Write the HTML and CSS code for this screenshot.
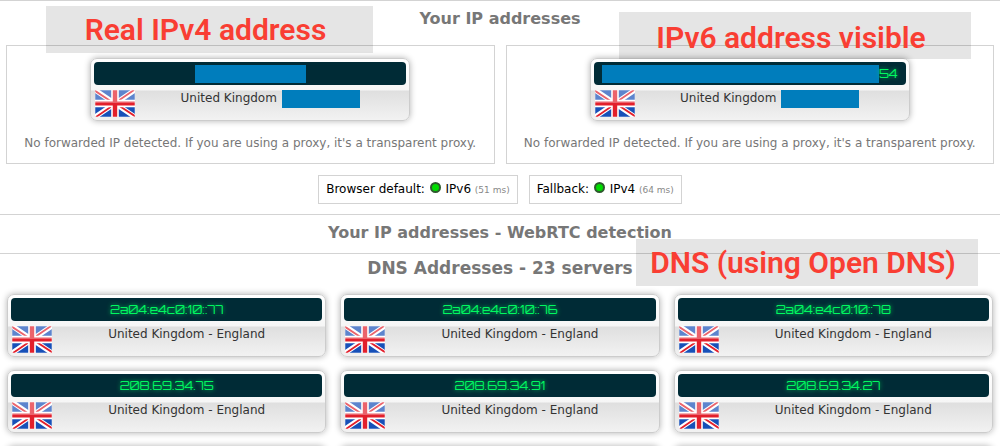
FILE: index.html
```
<!DOCTYPE html>
<html lang="en">
<head>
    <meta charset="utf-8">
    <title>IP leak test</title>
    <link rel="stylesheet" href="styles.css">
</head>
<body>
    <!-- Flag shared by every address card -->
    <svg class="defs" width="0" height="0" aria-hidden="true">
        <defs>
            <symbol id="flag-gb" viewBox="0 0 40 27">
                <path fill="#1750b8" d="M0 0h40v27H0z"/>
                <path stroke="#fff" stroke-width="5" d="M0 0l40 27M40 0L0 27"/>
                <path stroke="#e2202c" stroke-width="1.8" d="M0 .8L20 14M40 26.2L20 13M39 0L20 13M1 27l19-13"/>
                <path fill="#fff" d="M16.2 0h7.6v27h-7.6zM0 9.8h40v7.4H0z"/>
                <path fill="#e2202c" d="M17.8 0h4.4v27h-4.4zM0 11.4h40v4.2H0z"/>
                <path fill="#fff" fill-opacity=".3" d="M0 0h40v13H0z"/>
                <path fill="none" stroke="#fff" stroke-opacity=".25" d="M.5.5h39v26H.5z"/>
            </symbol>
        </defs>
    </svg>

    <section class="panel">
        <h2>Your IP addresses</h2>
        <div class="note note-ipv4">Real IPv4 address</div>
        <div class="note note-ipv6">IPv6 address visible</div>
        <div class="boxes">
            <div class="box">
                <div class="card">
                    <div class="ip"><span class="redacted redacted-ipv4"></span></div>
                    <div class="place">
                        <svg class="flag"><use href="#flag-gb"/></svg>
                        <p>United Kingdom <span class="redacted redacted-place"></span></p>
                    </div>
                </div>
                <p class="forwarded">No forwarded IP detected. If you are using a proxy, it's a transparent proxy.</p>
            </div>
            <div class="box">
                <div class="card">
                    <div class="ip"><span class="redacted redacted-ipv6"></span>54</div>
                    <div class="place">
                        <svg class="flag"><use href="#flag-gb"/></svg>
                        <p>United Kingdom <span class="redacted redacted-place"></span></p>
                    </div>
                </div>
                <p class="forwarded">No forwarded IP detected. If you are using a proxy, it's a transparent proxy.</p>
            </div>
        </div>
        <div class="modes">
            <div class="mode">Browser default: <span class="dot"></span> IPv6 <small>(51 ms)</small></div>
            <div class="mode">Fallback: <span class="dot"></span> IPv4 <small>(64 ms)</small></div>
        </div>
    </section>

    <section class="panel webrtc">
        <h2>Your IP addresses - WebRTC detection</h2>
    </section>

    <section class="panel dns">
        <h2>DNS Addresses - 23 servers</h2>
        <div class="note note-dns">DNS (using Open DNS)</div>
        <div class="servers">
            <div class="card">
                <div class="ip">2a04:e4c0:10::77</div>
                <div class="place">
                    <svg class="flag"><use href="#flag-gb"/></svg>
                    <p>United Kingdom - England</p>
                </div>
            </div>
            <div class="card">
                <div class="ip">2a04:e4c0:10::76</div>
                <div class="place">
                    <svg class="flag"><use href="#flag-gb"/></svg>
                    <p>United Kingdom - England</p>
                </div>
            </div>
            <div class="card">
                <div class="ip">2a04:e4c0:10::78</div>
                <div class="place">
                    <svg class="flag"><use href="#flag-gb"/></svg>
                    <p>United Kingdom - England</p>
                </div>
            </div>
            <div class="card">
                <div class="ip">208.69.34.75</div>
                <div class="place">
                    <svg class="flag"><use href="#flag-gb"/></svg>
                    <p>United Kingdom - England</p>
                </div>
            </div>
            <div class="card">
                <div class="ip">208.69.34.91</div>
                <div class="place">
                    <svg class="flag"><use href="#flag-gb"/></svg>
                    <p>United Kingdom - England</p>
                </div>
            </div>
            <div class="card">
                <div class="ip">208.69.34.27</div>
                <div class="place">
                    <svg class="flag"><use href="#flag-gb"/></svg>
                    <p>United Kingdom - England</p>
                </div>
            </div>
            <div class="card"></div>
            <div class="card"></div>
            <div class="card"></div>
        </div>
    </section>
</body>
</html>
```

FILE: styles.css
```
* {
    box-sizing: border-box;
}

body {
    margin: 0;
    background: #fff;
    color: #000;
    font-family: Verdana, 'DejaVu Sans', sans-serif;
    font-size: 12px;
    line-height: 16px;
}

h2,
p {
    margin: 0;
}

.defs {
    position: absolute;
}

.panel {
    position: relative;
    border-top: 1px solid #d3d3d3;
    padding: 8px 6px 10px;
}

h2 {
    color: #777;
    font-size: 16px;
    line-height: 20px;
    text-align: center;
}

/* Red captions laid over the page */
.note {
    position: absolute;
    height: 47px;
    padding-right: 8px;
    background: rgba(0, 0, 0, 0.1);
    color: #f93e33;
    font-family: Roboto, sans-serif;
    font-size: 30px;
    font-weight: 600;
    line-height: 48px;
    text-align: center;
    white-space: nowrap;
}

.note-ipv4 {
    top: 5px;
    left: 46px;
    width: 327px;
}

.note-ipv6 {
    z-index: 1;
    top: 11px;
    right: 29px;
    width: 352px;
    line-height: 52px;
}

.note-dns {
    top: -15px;
    right: 22px;
    width: 342px;
}

.boxes {
    display: grid;
    grid-template-columns: 1fr 1fr;
    gap: 11px;
    margin-top: 16px;
}

.box {
    display: flex;
    flex-direction: column;
    align-items: center;
    border: 1px solid #d3d3d3;
    padding: 12px 8px;
}

.box .card {
    width: 320px;
    max-width: 100%;
}

.forwarded {
    margin-top: 14px;
    color: #777;
    text-align: center;
}

.card {
    position: relative;
    min-height: 63px;
    padding: 3px;
    border: 1px solid #ccc;
    border-radius: 7px;
    background: linear-gradient(#fff 0, #f6f6f6 31px, #dfdfdf 32px, #f2f2f2 100%);
    box-shadow: 0 0 6px rgba(0, 0, 0, 0.3);
}

.ip {
    display: flex;
    align-items: center;
    justify-content: center;
    height: 23px;
    border-radius: 4px;
    background: #002b36;
    color: #00f860;
    font-family: Orbitron, Inter, sans-serif;
    font-size: 12px;
    text-shadow: 0 0 4px rgba(0, 240, 96, 0.8);
}

.place {
    display: flex;
    padding: 5px 1px 0;
    color: #333;
}

.place p {
    flex: 1;
    display: flex;
    justify-content: center;
    gap: 5px;
    text-align: center;
}

.flag {
    width: 40px;
    height: 27px;
}

.redacted {
    background: #007dbc;
    height: 18px;
}

.redacted-ipv4 {
    width: 111px;
}

.redacted-ipv6 {
    width: 277px;
}

.redacted-place {
    width: 78px;
}

.modes {
    display: flex;
    justify-content: center;
    gap: 11px;
    margin-top: 11px;
}

.mode {
    border: 1px solid #d3d3d3;
    padding: 5px 7px;
}

.mode small {
    color: #888;
    font-size: 9px;
}

.dot {
    display: inline-block;
    width: 11px;
    height: 11px;
    margin: 0 1px;
    border: 2px solid #2d5a2d;
    border-radius: 50%;
    background: #0d0;
}

.webrtc {
    padding: 8px 6px 10px;
}

.dns {
    padding: 4px 7px 10px;
}

.dns h2 {
    font-size: 17px;
}

.servers {
    display: grid;
    grid-template-columns: repeat(3, 1fr);
    gap: 13px 14px;
    margin-top: 16px;
}
```
